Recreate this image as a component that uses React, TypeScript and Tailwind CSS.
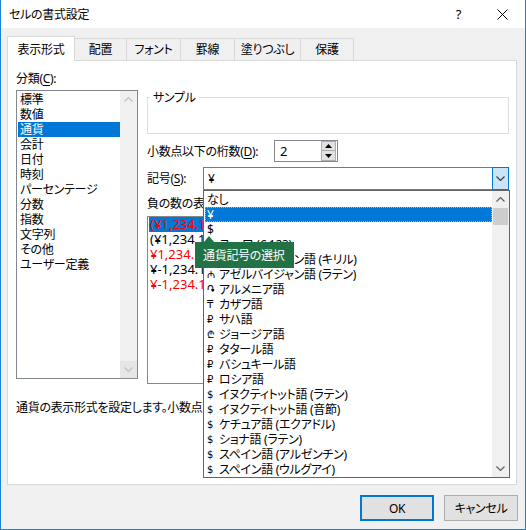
import React from "react";

const FONT =
  "font-['Noto_Sans','Noto_Sans_CJK_JP','DejaVu_Sans',sans-serif] [font-feature-settings:'palt']";

function Chevron({ dir, color }: { dir: "up" | "down"; color: string }) {
  return (
    <svg width="9" height="5" viewBox="0 0 9 5" className="block">
      {dir === "up" ? (
        <polyline points="0.5,4.5 4.5,0.5 8.5,4.5" fill="none" stroke={color} strokeWidth="1.2" />
      ) : (
        <polyline points="0.5,0.5 4.5,4.5 8.5,0.5" fill="none" stroke={color} strokeWidth="1.2" />
      )}
    </svg>
  );
}

function Tri({ dir }: { dir: "up" | "down" }) {
  return (
    <svg width="7" height="4" viewBox="0 0 7 4" className="block">
      {dir === "up" ? <polygon points="0,4 3.5,0 7,4" fill="#000" /> : <polygon points="0,0 3.5,4 7,0" fill="#000" />}
    </svg>
  );
}

const cats = ["標準", "数値", "通貨", "会計", "日付", "時刻", "パーセンテージ", "分数", "指数", "文字列", "その他", "ユーザー定義"];

const negs: { t: string; red: boolean; sel?: boolean }[] = [
  { t: "(¥1,234.10)", red: true, sel: true },
  { t: "(¥1,234.10)", red: false },
  { t: "¥1,234.10", red: true },
  { t: "¥-1,234.10", red: false },
  { t: "¥-1,234.10", red: true },
];

const currencies: { s: string; t: string; sel?: boolean }[] = [
  { s: "", t: "なし" },
  { s: "", t: "¥", sel: true },
  { s: "", t: "$" },
  { s: "€", t: "ユーロ (€ 123)" },
  { s: "₼", t: "アゼルバイジャン語 (キリル)" },
  { s: "₼", t: "アゼルバイジャン語 (ラテン)" },
  { s: "֏", t: "アルメニア語" },
  { s: "₸", t: "カザフ語" },
  { s: "₽", t: "サハ語" },
  { s: "₾", t: "ジョージア語" },
  { s: "₽", t: "タタール語" },
  { s: "₽", t: "バシュキール語" },
  { s: "₽", t: "ロシア語" },
  { s: "$", t: "イヌクティトット語 (ラテン)" },
  { s: "$", t: "イヌクティトット語 (音節)" },
  { s: "$", t: "ケチュア語 (エクアドル)" },
  { s: "$", t: "ショナ語 (ラテン)" },
  { s: "$", t: "スペイン語 (アルゼンチン)" },
  { s: "$", t: "スペイン語 (ウルグアイ)" },
];

export default function App() {
  return (
    <div
      className={`w-[526px] h-[530px] bg-[#f0f0f0] border-x border-b border-[#1883d7] flex flex-col text-[12px] leading-[15px] text-black tracking-[-0.3px] ${FONT}`}
    >
      {/* Title bar */}
      <div className="h-[28px] bg-white flex items-center shrink-0">
        <span className="ml-[8px]">セルの書式設定</span>
        <span className="ml-auto text-[13px]">?</span>
        <svg width="11" height="11" viewBox="0 0 11 11" className="ml-[36px] mr-[17px] block">
          <line x1="0.5" y1="0.5" x2="10.5" y2="10.5" stroke="#000" strokeWidth="1" />
          <line x1="10.5" y1="0.5" x2="0.5" y2="10.5" stroke="#000" strokeWidth="1" />
        </svg>
      </div>

      {/* Tabs */}
      <div className="flex items-end h-[24px] mt-[8px] ml-[6px] shrink-0">
        <div className="relative z-10 h-[25px] -mb-px w-[68px] bg-white border-x border-t border-[#d9d9d9] flex items-center justify-center">
          表示形式
        </div>
        <div className="h-[22px] w-[52px] border-t border-r border-[#d9d9d9] flex items-center justify-center">配置</div>
        <div className="h-[22px] w-[54px] border-t border-r border-[#d9d9d9] flex items-center justify-center">フォント</div>
        <div className="h-[22px] w-[54px] border-t border-r border-[#d9d9d9] flex items-center justify-center">罫線</div>
        <div className="h-[22px] w-[66px] border-t border-r border-[#d9d9d9] flex items-center justify-center">塗りつぶし</div>
        <div className="h-[22px] w-[53px] border-t border-r border-[#d9d9d9] flex items-center justify-center">保護</div>
      </div>

      {/* Panel */}
      <div className="ml-[6px] w-[510px] h-[425px] shrink-0 bg-white border border-[#d9d9d9] pl-[8px] pt-[10px] flex flex-col">
        <div className="flex gap-[9px]">
          {/* Left column */}
          <div className="w-[122px] flex flex-col">
            <div>
              分類(<span className="underline underline-offset-2">C</span>):
            </div>
            <div className="mt-[4px] h-[289px] border border-[#828790] flex">
              <div className="flex-1 pt-[1px] pl-[1px]">
                {cats.map((c) => (
                  <div
                    key={c}
                    className={`h-[15px] leading-[15px] pl-[2px] whitespace-nowrap ${
                      c === "通貨" ? "bg-[#0078d7] text-white" : ""
                    }`}
                  >
                    {c}
                  </div>
                ))}
              </div>
              <div className="w-[17px] bg-[#f0f0f0] flex flex-col justify-between">
                <div className="h-[17px] flex items-center justify-center">
                  <Chevron dir="up" color="#c0c0c0" />
                </div>
                <div className="h-[17px] flex items-center justify-center bg-[#e6e6e6]">
                  <Chevron dir="down" color="#c0c0c0" />
                </div>
              </div>
            </div>
          </div>

          {/* Right column */}
          <div className="w-[362px] mt-[19px] flex flex-col">
            <fieldset className="h-[44px] border border-[#dcdcdc]">
              <legend className="ml-[2px] px-[3px] leading-[15px]">サンプル</legend>
            </fieldset>

            <div className="mt-[6px] h-[22px] flex items-center">
              <div className="w-[127px] whitespace-nowrap">
                小数点以下の桁数(<span className="underline underline-offset-2">D</span>):
              </div>
              <div className="w-[64px] h-[22px] border border-[#828790] flex items-center">
                <span className="pl-[5px] text-[13px] tracking-normal">2</span>
                <div className="ml-auto mr-[1px] w-[15px] flex flex-col">
                  <div className="h-[10px] bg-[#e1e1e1] border border-[#adadad] flex items-center justify-center">
                    <Tri dir="up" />
                  </div>
                  <div className="h-[10px] bg-[#e1e1e1] border border-[#adadad] border-t-0 flex items-center justify-center">
                    <Tri dir="down" />
                  </div>
                </div>
              </div>
            </div>

            <div className="mt-[5px] h-[23px] flex items-center">
              <div className="w-[56px] whitespace-nowrap">
                記号(<span className="underline underline-offset-2">S</span>):
              </div>
              <div className="relative w-[306px] h-[23px] border border-[#7a7a7a] flex items-center">
                <span className="pl-[4px]">¥</span>
                <div className="ml-auto -mr-px -my-px w-[17px] h-[23px] bg-[#cce4f7] border border-[#0078d7] flex items-center justify-center">
                  <Chevron dir="down" color="#404040" />
                </div>

                {/* Dropdown list */}
                <div className="absolute left-[-1px] top-[22px] z-20 w-[307px] h-[288px] bg-white border border-[#646464] flex">
                  <div className="flex-1 pt-[1px] pl-[1px] overflow-hidden">
                    {currencies.map((c, i) => (
                      <div
                        key={i}
                        className={`h-[15px] leading-[13px] flex items-center pl-[1px] whitespace-nowrap border ${
                          c.sel
                            ? "bg-[#0078d7] text-white border-dotted border-[#f5a040]"
                            : "border-transparent"
                        }`}
                      >
                        {c.s ? (
                          <>
                            <span className="w-[12px] text-[10px] leading-[13px] font-['DejaVu_Sans',sans-serif]">
                              {c.s}
                            </span>
                            <span>{c.t}</span>
                          </>
                        ) : (
                          <span>{c.t}</span>
                        )}
                      </div>
                    ))}
                  </div>
                  <div className="w-[17px] bg-[#f0f0f0] flex flex-col">
                    <div className="h-[17px] flex items-center justify-center">
                      <Chevron dir="up" color="#606060" />
                    </div>
                    <div className="mx-[1px] h-[17px] bg-[#cdcdcd]" />
                    <div className="mt-auto h-[17px] flex items-center justify-center">
                      <Chevron dir="down" color="#606060" />
                    </div>
                  </div>

                  {/* Tooltip */}
                  <div className="absolute left-[-9px] top-[51px] w-[99px] h-[26px] bg-[#217346] text-white flex items-center pl-[8px] whitespace-nowrap">
                    <div className="absolute left-[9px] top-[-6px] w-0 h-0 border-x-[5px] border-x-transparent border-b-[6px] border-b-[#217346]" />
                    通貨記号の選択
                  </div>
                </div>
              </div>
            </div>

            <div className="mt-[6px] whitespace-nowrap">
              負の数の表示形式(<span className="underline underline-offset-2">N</span>):
            </div>
            <div className="mt-[5px] h-[168px] border border-[#828790] pt-0 pl-[1px] flex flex-col">
              {negs.map((n, i) => (
                <div
                  key={i}
                  className={`h-[15px] leading-[15px] pl-[1px] whitespace-nowrap text-[13px] tracking-normal ${
                    n.sel ? "bg-[#0078d7]" : ""
                  } ${n.red ? "text-[#ff0000]" : ""}`}
                >
                  {n.t}
                </div>
              ))}
            </div>
          </div>
        </div>

        <div className="mt-[16px] whitespace-nowrap overflow-hidden">
          通貨の表示形式を設定します。小数点の位置をそろえる場合は、[会計] を選択してください。
        </div>
      </div>

      {/* Buttons */}
      <div className="mt-[10px] flex justify-end gap-[10px] pr-[7px]">
        <button className="w-[74px] h-[26px] bg-[#e1e1e1] border-2 border-[#0078d7] flex items-center justify-center">
          OK
        </button>
        <button className="w-[74px] h-[26px] bg-[#e1e1e1] border border-[#adadad] flex items-center justify-center">
          キャンセル
        </button>
      </div>
    </div>
  );
}
